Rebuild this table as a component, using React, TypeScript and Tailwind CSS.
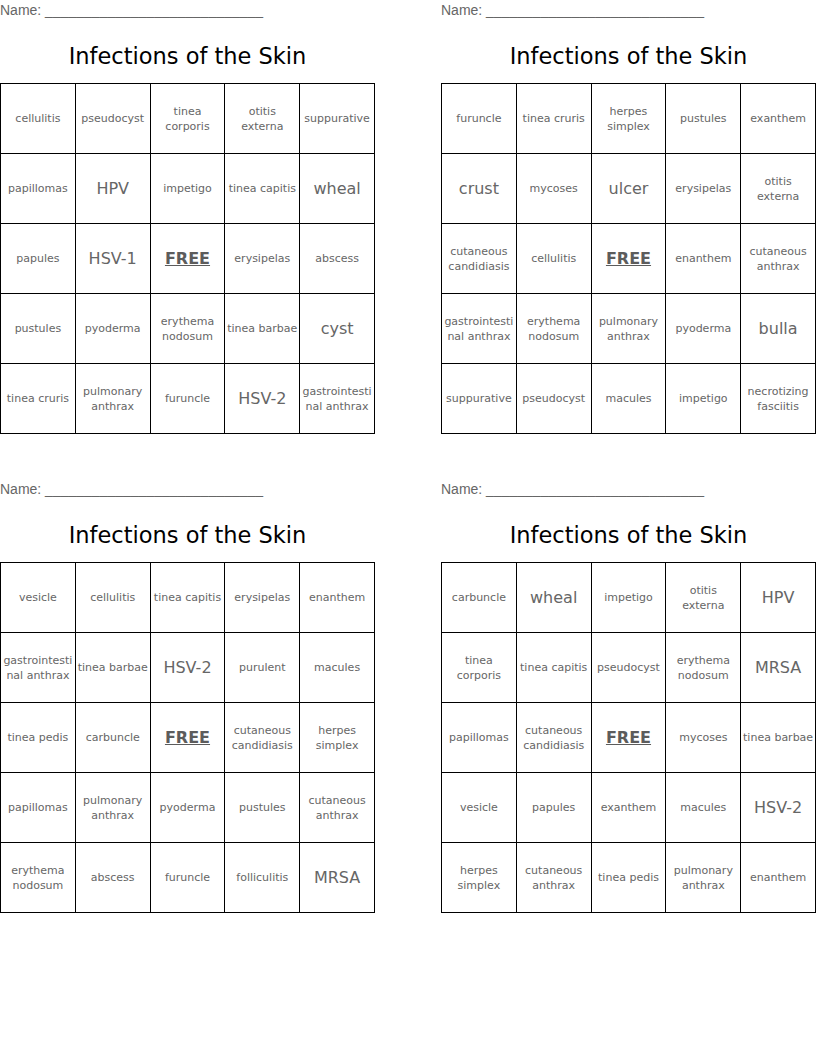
const cards: string[][] = [
  [
    "cellulitis", "pseudocyst", "tinea corporis", "otitis externa", "suppurative",
    "papillomas", "HPV", "impetigo", "tinea capitis", "wheal",
    "papules", "HSV-1", "FREE", "erysipelas", "abscess",
    "pustules", "pyoderma", "erythema nodosum", "tinea barbae", "cyst",
    "tinea cruris", "pulmonary anthrax", "furuncle", "HSV-2", "gastrointestinal anthrax",
  ],
  [
    "furuncle", "tinea cruris", "herpes simplex", "pustules", "exanthem",
    "crust", "mycoses", "ulcer", "erysipelas", "otitis externa",
    "cutaneous candidiasis", "cellulitis", "FREE", "enanthem", "cutaneous anthrax",
    "gastrointestinal anthrax", "erythema nodosum", "pulmonary anthrax", "pyoderma", "bulla",
    "suppurative", "pseudocyst", "macules", "impetigo", "necrotizing fasciitis",
  ],
  [
    "vesicle", "cellulitis", "tinea capitis", "erysipelas", "enanthem",
    "gastrointestinal anthrax", "tinea barbae", "HSV-2", "purulent", "macules",
    "tinea pedis", "carbuncle", "FREE", "cutaneous candidiasis", "herpes simplex",
    "papillomas", "pulmonary anthrax", "pyoderma", "pustules", "cutaneous anthrax",
    "erythema nodosum", "abscess", "furuncle", "folliculitis", "MRSA",
  ],
  [
    "carbuncle", "wheal", "impetigo", "otitis externa", "HPV",
    "tinea corporis", "tinea capitis", "pseudocyst", "erythema nodosum", "MRSA",
    "papillomas", "cutaneous candidiasis", "FREE", "mycoses", "tinea barbae",
    "vesicle", "papules", "exanthem", "macules", "HSV-2",
    "herpes simplex", "cutaneous anthrax", "tinea pedis", "pulmonary anthrax", "enanthem",
  ],
];

const Cell = ({ word }: { word: string }) => {
  if (word === "FREE") {
    return (
      <div className="flex items-center justify-center border-r border-b border-black text-[16px] font-bold underline text-[#5c5c5c]">
        FREE
      </div>
    );
  }
  // short words are printed bigger
  const big = word.length <= 5;
  return (
    <div
      className={
        big
          ? "flex items-center justify-center px-[1px] border-r border-b border-black text-center text-[16px] leading-[20px] text-[#666]"
          : "flex items-center justify-center px-[1px] border-r border-b border-black text-center text-[11px] leading-[15px] text-[#666] break-words"
      }
    >
      <span className="block w-full">{word}</span>
    </div>
  );
};

const Card = ({ words }: { words: string[] }) => (
  <div className="w-[375px]">
    <div className="h-[20px] text-[14px] leading-[20px] text-[#666] font-['Liberation_Sans',Arial,sans-serif]">
      Name: ____________________________
    </div>
    <div className="h-[63px] pt-[11px] flex items-center justify-center text-[22.5px] text-black">
      Infections of the Skin
    </div>
    <div className="grid grid-cols-5 auto-rows-[70px] border-l border-t border-black">
      {words.map((w, i) => (
        <Cell key={i} word={w} />
      ))}
    </div>
  </div>
);

export default function App() {
  return (
    <div className="w-[816px] h-[1056px] bg-white font-['DejaVu_Sans',Verdana,sans-serif]">
      <div className="grid grid-cols-[375px_375px] justify-between gap-y-[45px]">
        {cards.map((c, i) => (
          <Card key={i} words={c} />
        ))}
      </div>
    </div>
  );
}
